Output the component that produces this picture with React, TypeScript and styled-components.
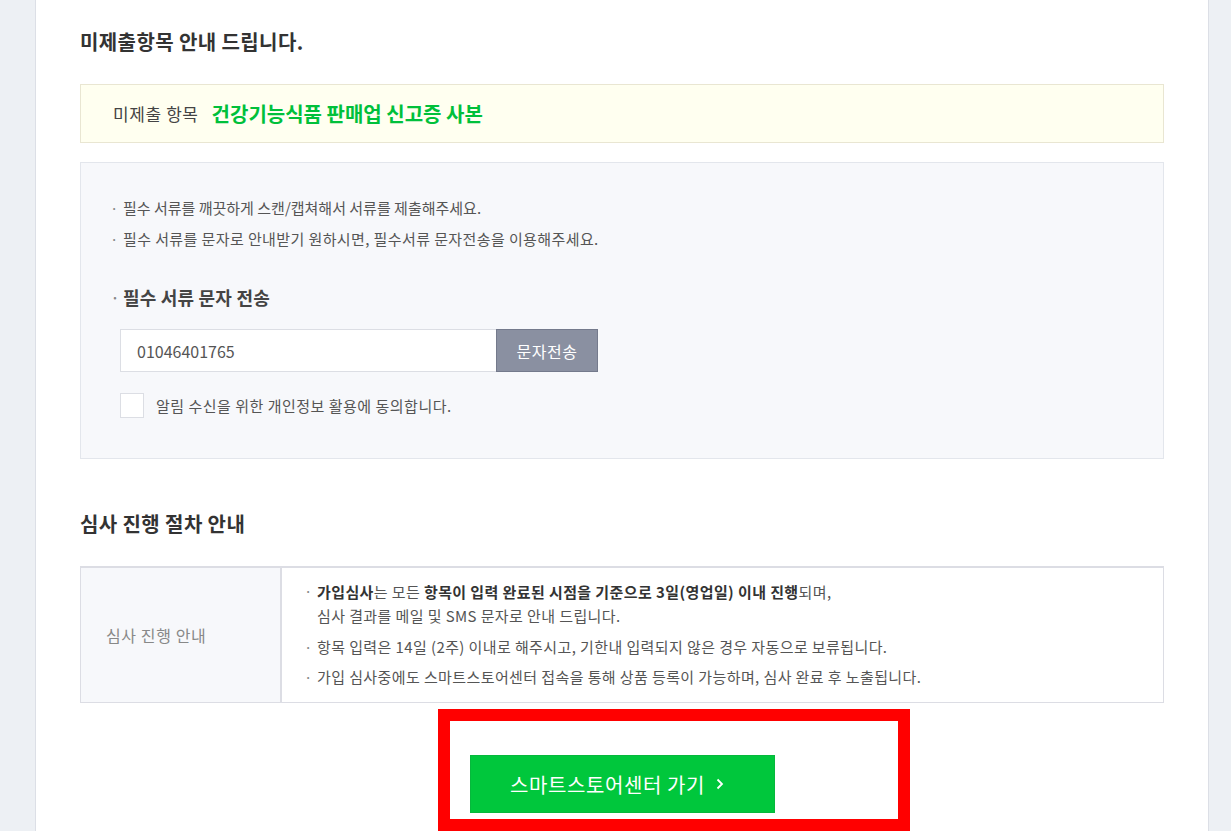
import styled, { createGlobalStyle } from 'styled-components';

const GlobalStyle = createGlobalStyle`
  html, body {
    margin: 0;
    padding: 0;
    background: #edf0f4;
    font-family: "Noto Sans CJK KR", "Noto Sans", sans-serif;
    color: #333;
  }
  #root {
    height: 831px;
    overflow: hidden;
  }
`;

const Page = styled.div`
  display: flex;
  padding-left: 35px;
`;

const Panel = styled.main`
  width: 1084px;
  min-height: 900px;
  background: #fff;
  border-left: 1px solid #dcdfe6;
  border-right: 1px solid #dcdfe6;
  padding: 29px 44px 0 44px;
`;

const Heading = styled.h2<{ $gap: number }>`
  margin: 0 0 ${p => p.$gap}px;
  font-size: 20px;
  line-height: 26px;
  font-weight: 700;
  color: #333;
  letter-spacing: 0.4px;
`;

const MissingBox = styled.div`
  display: flex;
  align-items: center;
  gap: 13px;
  height: 57px;
  padding: 0 32px;
  background: #fffff0;
  border: 1px solid #e9e6d2;
  margin-bottom: 19px;
`;

const MissingLabel = styled.span`
  font-size: 17px;
  letter-spacing: 0.6px;
  color: #444;
`;

const MissingValue = styled.strong`
  font-size: 20px;
  font-weight: 700;
  color: #00c03b;
`;

const InfoBox = styled.div`
  background: #f7f8fb;
  border: 1px solid #e3e6ec;
  padding: 34px 32px 40px 32px;
  margin-bottom: 52px;
`;

const BulletList = styled.ul<{ $gap: number }>`
  list-style: none;
  margin: 0;
  padding: 0;
  display: flex;
  flex-direction: column;
  gap: ${p => p.$gap}px;
`;

const Bullet = styled.li<{ $spacing?: number }>`
  position: relative;
  padding-left: 10px;
  font-size: 15px;
  line-height: 22px;
  letter-spacing: ${p => p.$spacing ?? 0.2}px;
  color: #555;
  &::before {
    content: '·';
    position: absolute;
    left: -3px;
    top: 0;
    color: #888;
  }
`;

const SubHeading = styled.h3`
  position: relative;
  margin: 34px 0 19px;
  padding-left: 10px;
  font-size: 18px;
  line-height: 26px;
  font-weight: 700;
  color: #444;
  letter-spacing: 0.2px;
  &::before {
    content: '·';
    position: absolute;
    left: -3px;
    font-weight: 400;
    color: #888;
  }
`;

const SendRow = styled.div`
  display: flex;
  margin-left: 7px;
  height: 43px;
`;

const PhoneInput = styled.input`
  width: 376px;
  box-sizing: border-box;
  height: 43px;
  border: 1px solid #dcdee4;
  border-right: none;
  padding: 0 16px;
  font-family: inherit;
  font-size: 16px;
  color: #555;
  background: #fff;
  outline: none;
`;

const SendButton = styled.button`
  width: 102px;
  height: 43px;
  background: #8a90a1;
  border: 1px solid #747a8c;
  color: #fff;
  font-family: inherit;
  font-size: 16px;
  letter-spacing: 0.5px;
  cursor: pointer;
`;

const AgreeRow = styled.label`
  display: flex;
  align-items: center;
  gap: 12px;
  margin: 21px 0 0 7px;
  font-size: 15px;
  letter-spacing: 0.5px;
  color: #555;
`;

const CheckBox = styled.span`
  width: 22px;
  height: 23px;
  background: #fff;
  border: 1px solid #dcdee4;
`;

const Table = styled.div`
  display: grid;
  grid-template-columns: 201px 1fr;
  border: 1px solid #dcdde4;
  border-top: 2px solid #dcdde4;
`;

const TableHead = styled.div`
  display: flex;
  align-items: center;
  padding-left: 25px;
  background: #f7f8fb;
  border-right: 2px solid #dcdde4;
  font-size: 16px;
  letter-spacing: 0.6px;
  color: #888;
`;

const TableBody = styled.div`
  padding: 12px 24px 14px 25px;
`;

const Wrapped = styled.span`
  display: block;
  line-height: 24px;
  b {
    color: #333;
  }
`;

const ButtonArea = styled.div`
  display: flex;
  justify-content: center;
  margin-top: 52px;
`;

const Highlight = styled.div`
  position: relative;
`;

const RedFrame = styled.div`
  position: absolute;
  top: -46px;
  left: -32px;
  right: -135px;
  bottom: -18px;
  border: 12px solid #ff0000;
  pointer-events: none;
`;

const GoButton = styled.button`
  display: flex;
  align-items: center;
  justify-content: center;
  gap: 11px;
  width: 305px;
  height: 58px;
  padding: 0 10px 0 0;
  background: #00c73c;
  border: 1px solid #06b83c;
  color: #fff;
  font-family: inherit;
  font-size: 20px;
  letter-spacing: 0.6px;
  cursor: pointer;
`;

function Chevron() {
  return (
    <svg width="8" height="12" viewBox="0 0 8 12" fill="none">
      <path d="M1.5 1.5 6 6l-4.5 4.5" stroke="#fff" strokeWidth="1.8" />
    </svg>
  );
}

export default function App() {
  return (
    <>
      <GlobalStyle />
      <Page>
        <Panel>
          <Heading $gap={29}>미제출항목 안내 드립니다.</Heading>
          <MissingBox>
            <MissingLabel>미제출 항목</MissingLabel>
            <MissingValue>건강기능식품 판매업 신고증 사본</MissingValue>
          </MissingBox>

          <InfoBox>
            <BulletList $gap={9}>
              <Bullet $spacing={0}>필수 서류를 깨끗하게 스캔/캡쳐해서 서류를 제출해주세요.</Bullet>
              <Bullet $spacing={0.4}>필수 서류를 문자로 안내받기 원하시면, 필수서류 문자전송을 이용해주세요.</Bullet>
            </BulletList>
            <SubHeading>필수 서류 문자 전송</SubHeading>
            <SendRow>
              <PhoneInput defaultValue="01046401765" />
              <SendButton>문자전송</SendButton>
            </SendRow>
            <AgreeRow>
              <CheckBox />
              알림 수신을 위한 개인정보 활용에 동의합니다.
            </AgreeRow>
          </InfoBox>

          <Heading $gap={29}>심사 진행 절차 안내</Heading>
          <Table>
            <TableHead>심사 진행 안내</TableHead>
            <TableBody>
              <BulletList $gap={8}>
                <Bullet $spacing={0.4}>
                  <Wrapped>
                    <b>가입심사</b>는 모든 <b>항목이 입력 완료된 시점을 기준으로 3일(영업일) 이내 진행</b>되며,
                  </Wrapped>
                  <Wrapped>심사 결과를 메일 및 SMS 문자로 안내 드립니다.</Wrapped>
                </Bullet>
                <Bullet $spacing={0.4}>항목 입력은 14일 (2주) 이내로 해주시고, 기한내 입력되지 않은 경우 자동으로 보류됩니다.</Bullet>
                <Bullet $spacing={0.4}>가입 심사중에도 스마트스토어센터 접속을 통해 상품 등록이 가능하며, 심사 완료 후 노출됩니다.</Bullet>
              </BulletList>
            </TableBody>
          </Table>

          <ButtonArea>
            <Highlight>
              <GoButton>
                스마트스토어센터 가기
                <Chevron />
              </GoButton>
              <RedFrame />
            </Highlight>
          </ButtonArea>
        </Panel>
      </Page>
    </>
  );
}
